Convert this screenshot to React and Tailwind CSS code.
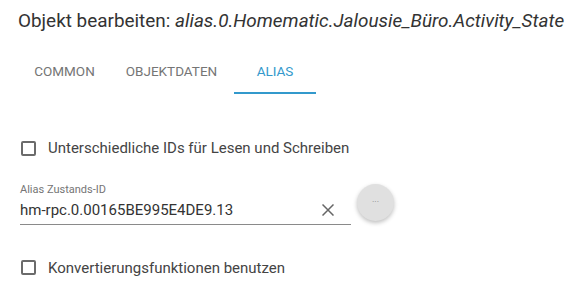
import React, { useState } from 'react';

const font = { fontFamily: 'Roboto, "Liberation Sans", sans-serif' };

const Check = ({ label, checked, onChange }) => (
  <label className="flex items-center cursor-pointer select-none">
    <span className="w-[15px] h-[15px] ml-[21px] border-2 border-[#6b6b6b] rounded-[2px] flex-none" onClick={onChange}>
      {checked && <span className="block w-full h-full bg-[#3399cc]" />}
    </span>
    <span className="ml-[12px] text-[15px] text-[#444]">{label}</span>
  </label>
);

const App = () => {
  const [tab, setTab] = useState(2);
  const [value, setValue] = useState('hm-rpc.0.00165BE995E4DE9.13');
  const [diffIds, setDiffIds] = useState(false);
  const [convert, setConvert] = useState(false);

  const tabs = [
    { name: 'COMMON', cls: 'w-[93px]' },
    { name: 'OBJEKTDATEN', cls: 'w-[121px]' },
    { name: 'ALIAS', cls: 'w-[82px] ml-[2px]' },
  ];

  return (
    <div className="w-[577px] h-[297px] bg-white overflow-hidden" style={font}>
      <h2 className="pl-[18px] pt-[9px] text-[18.9px] leading-[24px] text-[#333] whitespace-nowrap">
        Objekt bearbeiten: <i>alias.0.Homematic.Jalousie_Büro.Activity_State</i>
      </h2>

      <div className="flex pl-[18px] mt-[15px]">
        {tabs.map((t, i) => (
          <button
            key={t.name}
            onClick={() => setTab(i)}
            className={`${t.cls} h-[46px] flex flex-col items-center justify-center relative text-[13.5px] ${tab === i ? 'text-[#3399cc]' : 'text-[#757575]'}`}
          >
            {t.name}
            {tab === i && <span className="absolute left-0 right-0 bottom-0 h-[2px] bg-[#3399cc]" />}
          </button>
        ))}
      </div>

      <div className="mt-[43px]">
        <Check label="Unterschiedliche IDs für Lesen und Schreiben" checked={diffIds} onChange={() => setDiffIds(!diffIds)} />
      </div>

      <div className="flex items-center mt-[22px]">
        <div className="ml-[20px] w-[331px]">
          <div className="text-[11px] leading-[15px] text-[#757575]">Alias Zustands-ID</div>
          <div className="flex items-center border-b border-[#8a8a8a] h-[28px]">
            <input
              value={value}
              onChange={(e) => setValue(e.target.value)}
              className="flex-1 text-[15px] text-[#333] outline-none bg-transparent"
            />
            <button onClick={() => setValue('')} className="mr-[17px] text-[#666]">
              <svg width="12" height="12" viewBox="0 0 12 12" stroke="currentColor" strokeWidth="1.5">
                <path d="M0.5 0.5L11.5 11.5M11.5 0.5L0.5 11.5" />
              </svg>
            </button>
          </div>
        </div>
        <button className="ml-[6px] -mt-[2px] w-[37px] h-[37px] rounded-full bg-[#e0e0e0] shadow-[0_2px_4px_rgba(0,0,0,0.25)] text-[#888] text-[9px] leading-none">
          ···
        </button>
      </div>

      <div className="mt-[32px]">
        <Check label="Konvertierungsfunktionen benutzen" checked={convert} onChange={() => setConvert(!convert)} />
      </div>
    </div>
  );
};

export default App;
